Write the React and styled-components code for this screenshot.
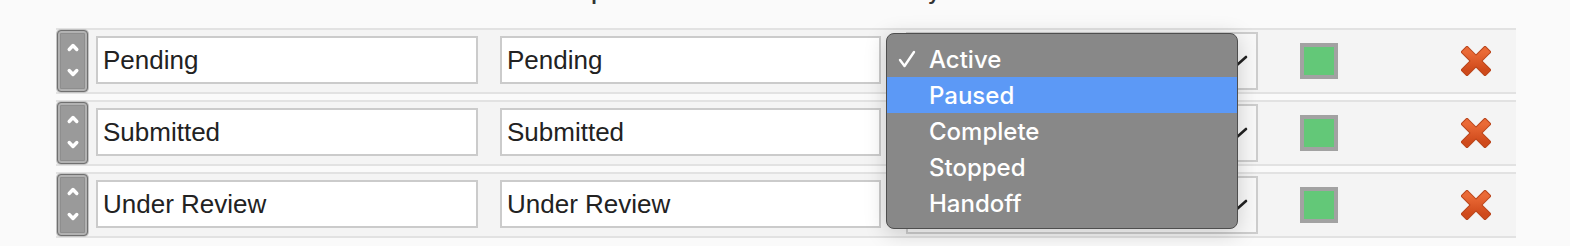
import styled, { createGlobalStyle } from "styled-components";

const GlobalStyle = createGlobalStyle`
  html, body {
    margin: 0;
    padding: 0;
    background: #fafafa;
    overflow: hidden;
  }
  body {
    font-family: "Liberation Sans", Arial, sans-serif;
  }
`;

const statuses = [
  { name: "Pending", description: "Pending", color: "#63c878" },
  { name: "Submitted", description: "Submitted", color: "#63c878" },
  { name: "Under Review", description: "Under Review", color: "#63c878" },
];

const systemOptions = ["Active", "Paused", "Complete", "Stopped", "Handoff"];

const columns = [
  { label: "Status", width: 427 },
  { label: "Description", width: 385 },
  { label: "System Status", width: 368 },
  { label: "Color", width: 120 },
];

const Handle = () => (
  <HandleBox>
    <svg width="14" height="44" viewBox="0 0 14 44">
      <polyline points="3.2,10.5 7,6.5 10.8,10.5" fill="none" stroke="#fff" strokeWidth="3.4" strokeLinecap="round" strokeLinejoin="round" />
      <polyline points="3.2,31.5 7,35.5 10.8,31.5" fill="none" stroke="#fff" strokeWidth="3.4" strokeLinecap="round" strokeLinejoin="round" />
    </svg>
  </HandleBox>
);

const DeleteIcon = () => (
  <svg width="30" height="30" viewBox="0 0 30 30">
    <defs>
      <linearGradient id="xg" x1="0" y1="0" x2="0" y2="1">
        <stop offset="0" stopColor="#ea6a36" />
        <stop offset="1" stopColor="#cf4a1b" />
      </linearGradient>
    </defs>
    <g strokeLinecap="square">
      <line x1="6" y1="6" x2="24" y2="24" stroke="#b9441a" strokeWidth="9.5" />
      <line x1="24" y1="6" x2="6" y2="24" stroke="#b9441a" strokeWidth="9.5" />
      <line x1="6" y1="6" x2="24" y2="24" stroke="url(#xg)" strokeWidth="7.5" />
      <line x1="24" y1="6" x2="6" y2="24" stroke="url(#xg)" strokeWidth="7.5" />
    </g>
  </svg>
);

const Dropdown = () => (
  <Popup>
    {systemOptions.map((opt, i) => (
      <Option key={opt} highlighted={i === 1}>
        <Gutter>
          {i === 0 && (
            <svg width="18" height="18" viewBox="0 0 18 18">
              <polyline points="2,10 6.5,16 16,2" fill="none" stroke="#fff" strokeWidth="2.4" strokeLinecap="round" strokeLinejoin="round" />
            </svg>
          )}
        </Gutter>
        <span>{opt}</span>
      </Option>
    ))}
  </Popup>
);

const App = () => {
  return (
    <>
      <GlobalStyle />
      <Page>
        <Header>
          {columns.map((c) => (
            <HeadLabel key={c.label} width={c.width}>
              {c.label}
            </HeadLabel>
          ))}
        </Header>
        <Rows>
          {statuses.map((s, i) => (
            <Row key={s.name}>
              <Handle />
              <TextInput value={s.name} readOnly />
              <TextInput value={s.description} readOnly />
              <SelectCell>
                <SelectBox>
                  <svg width="22" height="12" viewBox="0 0 22 12">
                    <polyline points="2,2 11,10 20,2" fill="none" stroke="#222" strokeWidth="2.6" strokeLinecap="round" strokeLinejoin="round" />
                  </svg>
                </SelectBox>
                {i === 0 && <Dropdown />}
              </SelectCell>
              <ColorCell>
                <Swatch color={s.color} />
              </ColorCell>
              <DeleteCell>
                <DeleteIcon />
              </DeleteCell>
            </Row>
          ))}
        </Rows>
      </Page>
    </>
  );
};

export default App;

const Page = styled.div`
  width: 1570px;
  height: 246px;
  padding-left: 56px;
  box-sizing: border-box;
  overflow: hidden;
`;

const Header = styled.div`
  display: flex;
  height: 28px;
  padding-left: 47px;
  overflow: hidden;
  align-items: flex-start;
`;

const HeadLabel = styled.div`
  width: ${({ width }) => width}px;
  flex-shrink: 0;
  margin-top: -18px;
  font-size: 20px;
  line-height: 22px;
  font-weight: bold;
  color: #333;
  white-space: nowrap;
`;

const Rows = styled.div`
  display: flex;
  flex-direction: column;
  gap: 6px;
  width: 1460px;
`;

const Row = styled.div`
  display: flex;
  align-items: center;
  height: 62px;
  background: #f4f4f4;
  border-top: 2px solid #e2e2e2;
  border-bottom: 2px solid #e2e2e2;
`;

const HandleBox = styled.div`
  width: 31px;
  height: 62px;
  box-sizing: border-box;
  margin-left: 1px;
  border: 1px solid #707070;
  border-radius: 4px;
  background: #9a9a9a;
  box-shadow: 0 0 0 1px #c4c4c4, inset 0 0 0 2px #b2b2b2, inset 0 0 0 3px #8e8e8e;
  display: flex;
  align-items: center;
  justify-content: center;
  flex-shrink: 0;
`;

const TextInput = styled.input`
  width: 382px;
  height: 48px;
  box-sizing: border-box;
  margin: -2px 0 0 8px;
  border: 2px solid #cbcbcb;
  background: #fff;
  padding: 0 5px;
  font-family: "Liberation Sans", Arial, sans-serif;
  font-size: 26px;
  color: #222;
  outline: none;

  & + & {
    margin-left: 22px;
    width: 381px;
  }
`;

const SelectCell = styled.div`
  position: relative;
  margin-left: 25px;
  width: 352px;
  height: 58px;
  flex-shrink: 0;
`;

const SelectBox = styled.div`
  width: 100%;
  height: 100%;
  box-sizing: border-box;
  border: 2px solid #cdcdcd;
  background: #f8f8f8;
  display: flex;
  align-items: center;
  justify-content: flex-end;
  padding-right: 8px;
`;

const Popup = styled.div`
  position: absolute;
  left: -20px;
  top: 1px;
  width: 352px;
  box-sizing: border-box;
  padding: 7px 0;
  background: #888888;
  border: 1px solid #4e4e4e;
  border-radius: 8px;
  box-shadow: 0 4px 22px rgba(0, 0, 0, 0.18);
  z-index: 10;
  font-family: Inter, "Noto Sans", sans-serif;
  font-size: 24px;
  font-weight: 500;
  color: #fff;
`;

const Option = styled.div`
  display: flex;
  align-items: center;
  height: 36px;
  background: ${({ highlighted }) => (highlighted ? "#5c99f6" : "transparent")};
`;

const Gutter = styled.div`
  width: 42px;
  padding-left: 11px;
  box-sizing: border-box;
  display: flex;
  align-items: center;
`;

const ColorCell = styled.div`
  width: 122px;
  display: flex;
  justify-content: center;
  flex-shrink: 0;
`;

const Swatch = styled.div`
  width: 38px;
  height: 36px;
  box-sizing: border-box;
  border: 4px solid #a2a2a2;
  background: ${({ color }) => color};
`;

const DeleteCell = styled.div`
  flex: 1;
  display: flex;
  justify-content: center;
  padding-left: 56px;
`;
